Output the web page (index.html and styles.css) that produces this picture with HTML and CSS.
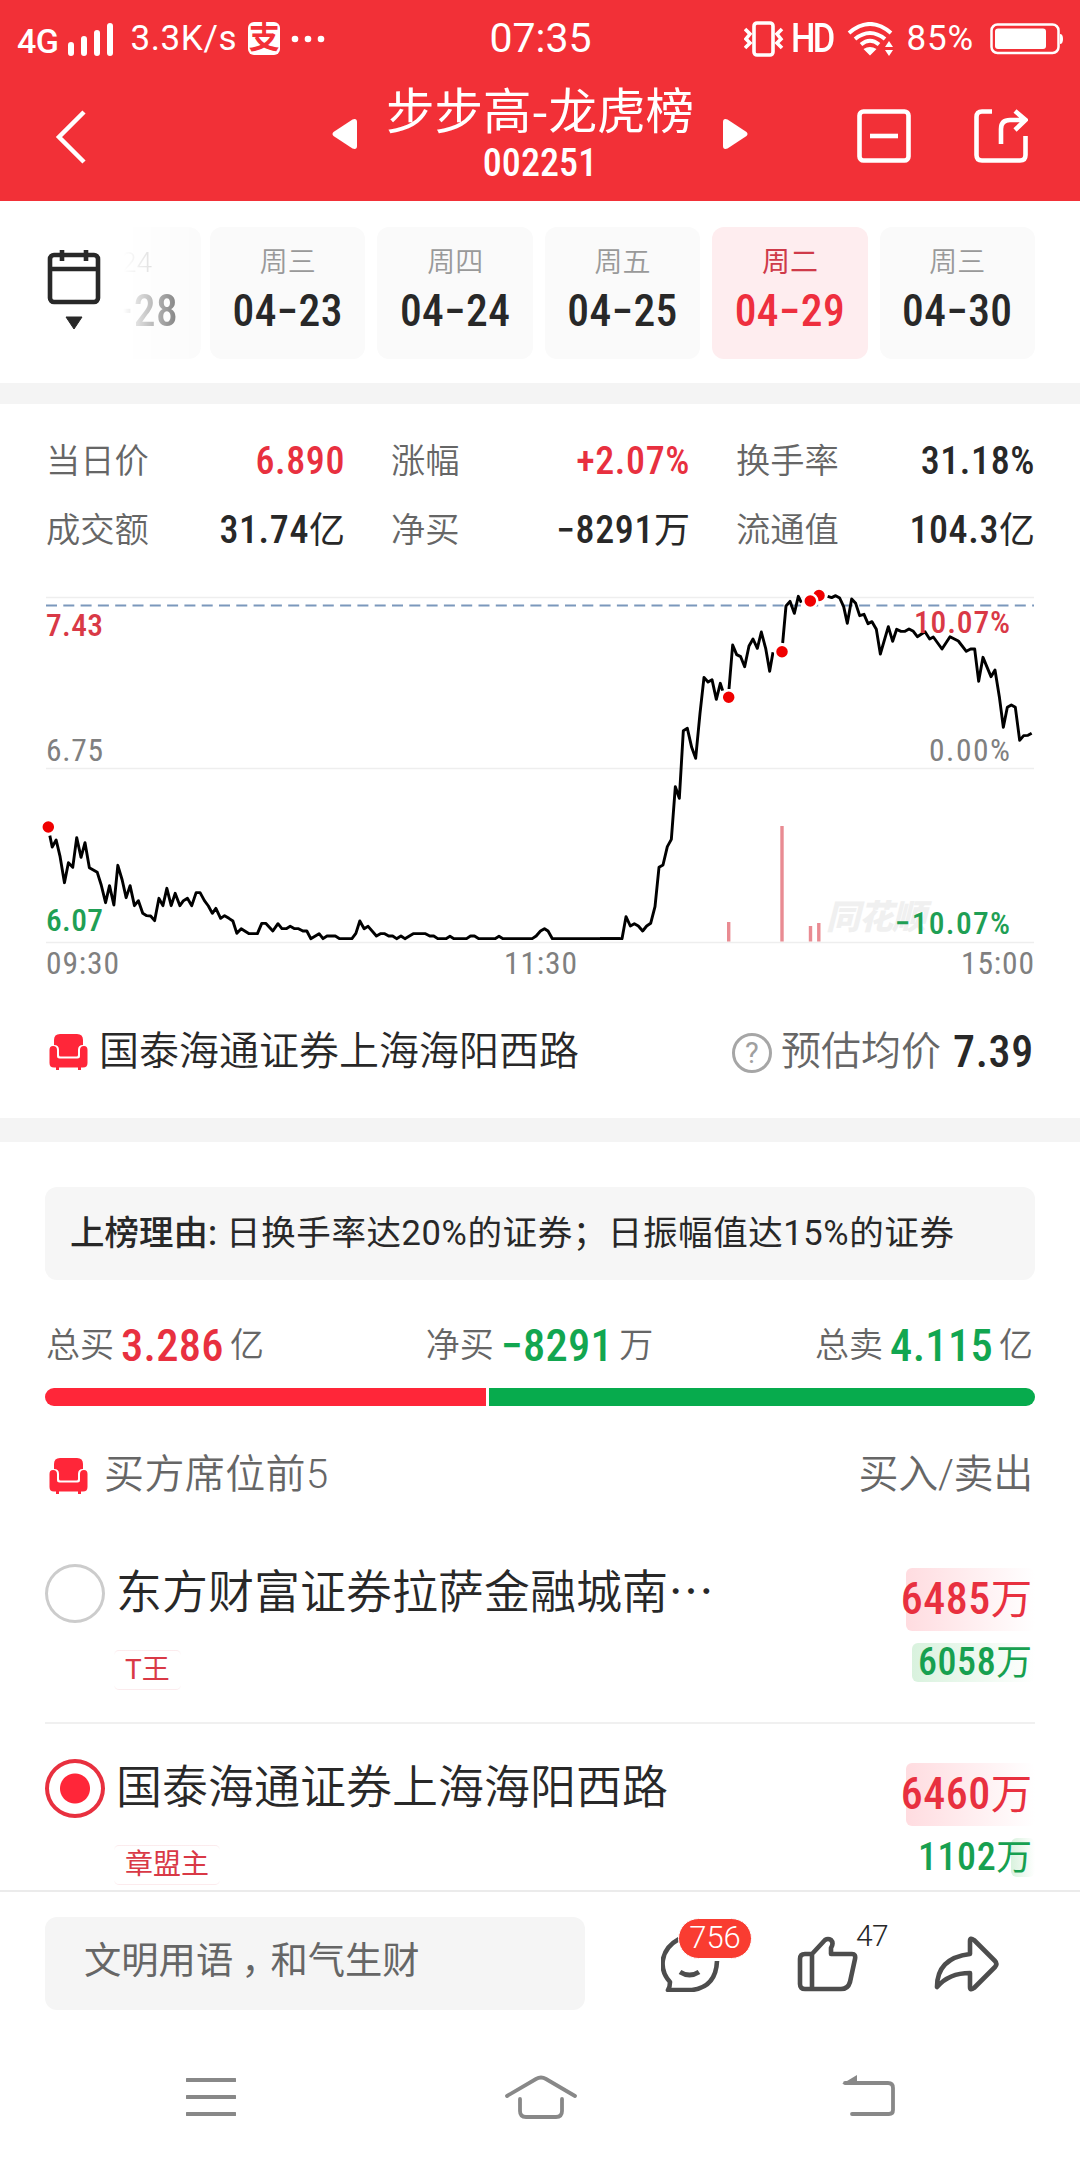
FILE: index.html
```html
<!DOCTYPE html>
<html lang="zh-CN">
<head>
<meta charset="utf-8">
<title>步步高-龙虎榜</title>
<link rel="stylesheet" href="styles.css">
</head>
<body>
<svg class="defs" width="0" height="0" aria-hidden="true">
  <symbol id="seat" viewBox="0 0 40 38">
    <path d="M5 12V7Q5 1 11 1H28Q34 1 34 7V12Q29 12 29 17V22Q29 23.500 27.500 23.500H11.500Q10 23.500 10 22V17Q10 12 5 12Z"/>
    <path d="M4 13Q8 13 8 17V23Q8 25.500 10.500 25.500H28.500Q31 25.500 31 23V17Q31 13 35 13Q38.500 13 38.500 17V30Q38.500 34.500 34 34.500H32V37H29V34.500H10V37H7V34.500H5Q.5 34.500 .5 30V17Q.5 13 4 13Z"/>
  </symbol>
</svg>

<header class="header">
  <div class="status">
    <div class="status-left">
      <span class="net">4G</span>
      <svg class="signal" width="46" height="34" viewBox="0 0 46 34"><path d="M3 23V31M16 17V31M29 11V31M42 4V31"/></svg>
      <span class="speed">3.3K/s</span>
      <span class="pay">支</span>
      <svg width="34" height="8" viewBox="0 0 34 8"><circle cx="4" cy="4" r="3.300"/><circle cx="17" cy="4" r="3.300"/><circle cx="30" cy="4" r="3.300"/></svg>
    </div>
    <div class="clock">07:35</div>
    <div class="status-right">
      <svg class="vib" width="40" height="36" viewBox="0 0 40 36"><rect x="10" y="2" width="19" height="32" rx="3"/><path d="M1 8L6 13L2 18L6 22L1 27M38 8L33 13L37 18L33 22L38 27"/></svg>
      <span class="hd">HD</span>
      <svg class="wifi" width="47" height="34" viewBox="0 0 47 34"><path class="arc" d="M2 11Q23 -7 44 11M8 17Q23 5 38 17M14 22.500Q23 15 32 22.500"/><path class="tip" d="M16.500 27Q23 23 29.500 27L23 33.500ZM38 25L42 19L46 25ZM38 28L42 34L46 28Z"/></svg>
      <span class="pct">85%</span>
      <svg class="battery" width="74" height="32" viewBox="0 0 74 32"><rect class="case" x="1.500" y="1.500" width="67" height="28.500" rx="6"/><rect class="fill" x="5" y="5.500" width="51" height="20.500" rx="3"/><path class="fill" d="M70 11Q73 11 73 16Q73 21 70 21Z"/></svg>
    </div>
  </div>
  <div class="titlebar">
    <svg class="back" width="32" height="56" viewBox="0 0 32 56"><path d="M29 3L4 28L29 53"/></svg>
    <div class="titles">
      <svg width="26" height="32" viewBox="0 0 26 32"><path d="M1.500 14L20.500 1.500Q25 0 25 4V28Q25 32 20.500 30.500L1.500 18Q-.5 16 1.500 14Z"/></svg>
      <div class="names"><h1>步步高-龙虎榜</h1><div class="code">002251</div></div>
      <svg width="26" height="32" viewBox="0 0 26 32"><path d="M24.500 14L5.500 1.500Q1 0 1 4V28Q1 32 5.500 30.500L24.500 18Q26.500 16 24.500 14Z"/></svg>
    </div>
    <div class="tools">
      <svg width="54" height="54" viewBox="0 0 54 54"><rect x="2.500" y="2.500" width="49" height="49" rx="4"/><path d="M13 27H41"/></svg>
      <svg width="54" height="54" viewBox="0 0 54 54"><path d="M18 2.500H8Q2.500 2.500 2.500 8V46Q2.500 51.500 8 51.500H46Q51.500 51.500 51.500 46V27M27 35V20Q27 11 36 11H51M41 2L51.500 11L41 21"/></svg>
    </div>
  </div>
</header>

<section class="dates">
  <div class="calendar">
    <svg width="54" height="82" viewBox="0 0 54 82"><rect x="3" y="6" width="48" height="47" rx="4"/><path d="M3 20H51M15 1V12M39 1V12"/><path class="tri" d="M19 68H35L27 80Z"/></svg>
  </div>
  <div class="strip">
    <div class="day past"><span class="wk">24</span><span class="num">−28</span></div>
    <div class="day"><span class="wk">周三</span><span class="num">04−23</span></div>
    <div class="day"><span class="wk">周四</span><span class="num">04−24</span></div>
    <div class="day"><span class="wk">周五</span><span class="num">04−25</span></div>
    <div class="day active"><span class="wk">周二</span><span class="num">04−29</span></div>
    <div class="day"><span class="wk">周三</span><span class="num">04−30</span></div>
  </div>
</section>

<section class="quote">
  <dl class="stats">
    <div><dt>当日价</dt><dd class="up">6.890</dd></div>
    <div><dt>涨幅</dt><dd class="up">+2.07%</dd></div>
    <div><dt>换手率</dt><dd>31.18%</dd></div>
    <div><dt>成交额</dt><dd>31.74<small>亿</small></dd></div>
    <div><dt>净买</dt><dd>−8291<small>万</small></dd></div>
    <div><dt>流通值</dt><dd>104.3<small>亿</small></dd></div>
  </dl>
  <svg class="chart" width="1080" height="416" viewBox="0 570 1080 416">
    <path class="grid" d="M46 597.500H1034M46 768.500H1034M46 942.500H1034"/>
    <path class="avg" d="M46 605.500H1034"/>
    <text class="mark" x="826" y="929" textLength="100">同花顺</text>
    <path class="vol" d="M728.700 922V941.500M782 826V941.500M810.500 926V941.500M818.800 923V941.500"/>
    <g transform="translate(0 570) scale(.3954 .33333)">
      <polyline class="price" points="126,797 132,831 142,810 152,860 163,938 173,878 184,892 194,803 205,862 215,818 226,893 246,907 256,945 267,998 277,947 288,1005 298,886 309,930 319,983 329,947 340,1007 350,992 361,1030 371,1037 381,1038 391,1052 402,985 412,1007 422,955 433,1007 443,970 455,1007 464,992 474,985 485,1007 496,968 506,968 517,992 527,1008 537,1030 546,1015 558,1045 568,1037 579,1045 589,1053 599,1090 610,1076 630,1091 651,1091 662,1060 672,1060 690,1083 703,1061 713,1076 724,1076 734,1069 745,1076 755,1076 766,1083 776,1083 786,1106 807,1091 817,1106 827,1098 848,1098 859,1106 890,1106 900,1090 910,1053 921,1076 931,1069 952,1098 962,1091 973,1091 983,1098 993,1098 1003,1106 1014,1098 1024,1106 1045,1091 1076,1091 1087,1098 1097,1098 1107,1106 1128,1106 1138,1099 1148,1106 1180,1106 1190,1098 1200,1098 1211,1106 1252,1106 1262,1099 1272,1106 1346,1106 1356,1098 1367,1083 1377,1076 1386,1083 1397,1106 1568,1106"/>
    </g>
    <g transform="translate(600 570) scale(.33333)">
      <polyline class="price" points="0,1106 66,1106 78,1040 91,1068 103,1061 115,1068 128,1083 140,1068 152,1060 165,1010 177,892 189,885 202,830 214,808 226,650 238,685 250,482 262,475 275,532 287,565 300,430 312,322 324,336 336,329 349,388 361,340 368,362"/>
      <polyline class="price" points="387,357 398,225 410,254 422,260 434,290 447,228 459,207 472,235 484,186 497,235 509,304 519,247"/>
      <polyline class="price" points="548,219 558,108 570,94 583,130 595,79 604,98"/>
      <polyline class="price" points="683,79 695,83 707,77 719,84 731,110 742,160 755,87 767,100 779,137 792,133 804,161 816,155 829,178 841,252 865,170 878,214 890,178 903,184 915,184 927,177 940,184 952,200 975,185 989,207 1000,201 1026,237 1050,200 1075,213 1099,244 1112,237 1124,237 1136,334 1149,262 1173,320 1185,300 1198,380 1210,472 1222,412 1234,405 1246,412 1259,511 1271,497 1284,496 1295,490"/>
    </g>
    <g class="dots"><circle cx="48.300" cy="827" r="7"/><circle cx="728.700" cy="697.300" r="7"/><circle cx="782" cy="651.700" r="7"/><circle cx="819" cy="595.500" r="7"/><circle cx="810.300" cy="601" r="7"/></g>
    <g class="axis">
      <text class="red" x="46" y="636" textLength="57">7.43</text>
      <text x="46" y="761" textLength="57">6.75</text>
      <text class="green" x="46" y="931" textLength="57">6.07</text>
      <text class="red" x="914" y="633" textLength="96">10.07%</text>
      <text x="929" y="761" textLength="81">0.00%</text>
      <text class="green" x="895" y="934" textLength="115">−10.07%</text>
      <text x="46" y="974" textLength="73">09:30</text>
      <text x="504" y="974" textLength="73">11:30</text>
      <text x="961" y="974" textLength="73">15:00</text>
    </g>
  </svg>
  <div class="broker">
    <svg class="seat" width="40" height="38"><use href="#seat"/></svg>
    <span class="broker-name">国泰海通证券上海海阳西路</span>
    <span class="help">?</span>
    <span class="est">预估均价</span>
    <b class="est-num">7.39</b>
  </div>
</section>

<section class="board">
  <p class="reason"><b>上榜理由:</b><span>日换手率达20%的证券；日振幅值达15%的证券</span></p>
  <div class="totals">
    <div>总买<b class="up">3.286</b>亿</div>
    <div>净买<b class="down">−8291</b>万</div>
    <div>总卖<b class="down">4.115</b>亿</div>
  </div>
  <div class="ratio"><i class="buy"></i><i class="sell"></i></div>
  <div class="list-head">
    <svg class="seat" width="40" height="38"><use href="#seat"/></svg>
    <span>买方席位前5</span><span class="cols">买入/卖出</span>
  </div>
  <article class="row">
    <i class="radio"></i>
    <div class="who"><h2>东方财富证券拉萨金融城南<span class="more">⋯</span></h2><span class="tag">T王</span></div>
    <div class="amounts"><div class="in"><i></i><span>6485<small>万</small></span></div><div class="out"><i></i><span>6058<small>万</small></span></div></div>
  </article>
  <article class="row">
    <i class="radio on"></i>
    <div class="who"><h2>国泰海通证券上海海阳西路</h2><span class="tag">章盟主</span></div>
    <div class="amounts"><div class="in"><i></i><span>6460<small>万</small></span></div><div class="out short"><i></i><span>1102<small>万</small></span></div></div>
  </article>
</section>

<footer class="footer">
  <div class="input">文明用语<span class="comma">，</span>和气生财</div>
  <div class="action chat">
    <svg width="60" height="56" viewBox="0 0 60 56"><path d="M18 3C-2 14 -2 34 9 46Q9 51 7 54H31Q55 51 56 25"/><path class="smile" d="M19 36Q28.500 42 38 36"/></svg>
    <span class="badge">756</span>
  </div>
  <div class="action like">
    <svg width="62" height="56" viewBox="0 0 62 56"><path d="M8 18H15L28 4Q31 2 34 4Q37 7 34 12V18H55Q59 18 58 23L53 46Q51 53 44 53H8Q3 53 3 48V23Q3 18 8 18ZM15 18V53"/></svg>
    <span class="likes">47</span>
  </div>
  <div class="action">
    <svg width="66" height="56" viewBox="0 0 66 56"><path d="M37 5Q37 1 41 4L62 25Q65 28 62 31L41 52Q37 55 37 51V37Q16 37 4 51Q4 22 37 18Z"/></svg>
  </div>
</footer>
<nav class="nav">
  <svg width="50" height="44" viewBox="0 0 50 44"><path d="M1 5H49M1 22H49M1 39H49"/></svg>
  <svg class="home" width="72" height="46" viewBox="0 0 72 46"><path d="M2 22L31 5Q36 2 41 5L70 22M15 25V37Q15 43 21 43H51Q57 43 57 37V25"/></svg>
  <svg width="54" height="44" viewBox="0 0 54 44"><path d="M10 39H47Q51 39 51 35V13Q51 8 46 8H3"/><path class="head" d="M0 9L15 0V9Z"/></svg>
</nav>
</body>
</html>
```
FILE: styles.css
```css
* { box-sizing: border-box; margin: 0; padding: 0; }
body {
  width: 1080px; height: 2160px; overflow: hidden;
  display: flex; flex-direction: column;
  background: #fff; color: #282828;
  font-family: Roboto, "Noto Sans CJK SC", sans-serif; font-weight: 350; line-height: 1.172;
}
svg { display: block; flex: none; }
i { font-style: normal; }
small { font-size: 1em; font-weight: 400; }
.defs { position: absolute; }
.up { color: #e8303f; }
.down { color: #12a650; }
.code, .num, dd, .est-num, .totals b, .amounts span { font-stretch: 75%; }

.header { flex: none; height: 201px; background: #f23037; color: #fff; }
.status { height: 74px; display: grid; grid-template-columns: 1fr auto 1fr; align-items: center; padding: 0 16px 3px 17px; }
.status svg { fill: #fff; }
.status-left, .status-right { display: flex; align-items: center; font-size: 35px; line-height: 71px; }
.status-right { justify-content: flex-end; }
.net { font-size: 34px; font-weight: 500; letter-spacing: -.5px; padding-top: 6px; }
.status .signal { fill: none; stroke: #fff; stroke-width: 6; stroke-linecap: round; margin: 0 16px 0 10px; }
.speed { font-weight: 400; letter-spacing: .6px; }
.pay { width: 32px; height: 33px; margin: 0 11px 0 11px; border-radius: 6px; background: #fff; color: #f23037; font-size: 31px; line-height: 32px; font-weight: 700; text-align: center; }
.clock { font-size: 41px; font-weight: 400; }
.status .vib { fill: none; stroke: #fff; stroke-width: 3.600; }
.hd { font-size: 40px; font-weight: 500; letter-spacing: -3px; margin: 0 10px 0 7px; transform-origin: left; transform: scaleX(.86); width: 46px; }
.wifi .arc { fill: none; stroke: #fff; stroke-width: 4; }
.pct { font-weight: 400; margin: 0 16px 0 13px; letter-spacing: .8px; }
.status .battery .case { fill: none; stroke: #fff; stroke-width: 2.500; }
.titlebar { height: 127px; display: flex; align-items: center; justify-content: space-between; padding: 0 52px 4px 55px; }
.titlebar svg { fill: #fff; }
.titlebar .back { fill: none; stroke: #fff; stroke-width: 4.500; margin-top: 2px; }
.titles { display: flex; gap: 28px; margin: -14px 0 0 136px; }
.titles svg { margin-top: 44px; }
.names { width: 308px; text-align: center; white-space: nowrap; }
h1 { font-size: 48.500px; line-height: 68px; font-weight: 400; font-family: "Noto Sans CJK SC", sans-serif; }
.code { font-size: 38px; line-height: 42px; font-weight: 500; letter-spacing: .1px; }
.tools { display: flex; gap: 63px; }
.titlebar .tools svg { fill: none; stroke: #fff; stroke-width: 4.600; }

.dates { flex: none; height: 182px; display: flex; align-items: flex-start; padding: 26px 45px 0; }
.calendar { width: 45px; padding: 22px 0 0 2px; }
.calendar svg { fill: none; stroke: #282828; stroke-width: 4.600; }
.calendar .tri { fill: #282828; stroke-width: 1; }
.strip { flex: 1; display: flex; justify-content: flex-end; gap: 12px; }
.day { flex: none; width: 155.400px; height: 132px; border-radius: 12px; background: #fafafa; display: flex; flex-direction: column; align-items: center; padding-top: 19px; }
.wk { font-size: 28px; line-height: 34px; color: #999; }
.num { font-size: 43.500px; line-height: 64px; font-weight: 500; letter-spacing: .4px; }
.active { background: #feedef; }
.active .wk { color: #cf3a49; font-weight: 400; }
.active .num { color: #ee2f3e; }
.past { width: 108px; margin-right: -3px; align-items: flex-start; padding-left: 28px; -webkit-mask: linear-gradient(90deg, transparent 28%, #000 115%); mask: linear-gradient(90deg, transparent 28%, #000 115%); }
.past .num { margin-left: -9px; }

.quote { flex: none; border-top: 21px solid #f4f4f4; height: 735px; padding-top: 23px; }
.stats { display: grid; grid-template-columns: repeat(3, 299px); column-gap: 46px; row-gap: 0; margin-left: 46px; }
.stats div { display: flex; justify-content: space-between; align-items: center; height: 69px; }
dt { font-size: 34.300px; color: #666; }
dd { font-size: 38px; font-weight: 500; letter-spacing: .6px; white-space: nowrap; }
dd small { font-size: 36px; letter-spacing: 0; }
.chart { display: block; margin-top: 5px; }
.grid { stroke: #eee; stroke-width: 1.500; }
.avg { stroke: #7b98bc; stroke-width: 2; stroke-dasharray: 11 6.300; }
.mark { font: italic 900 34px "Noto Sans CJK SC", sans-serif; fill: #f0f0f0; }
.vol { stroke: #e98b92; stroke-width: 3.400; }
.price { fill: none; stroke: #000; stroke-width: 2.900; stroke-linejoin: round; vector-effect: non-scaling-stroke; }
.dots circle { fill: #f00000; stroke: #fff; stroke-width: 2.500; }
.axis text { font: 400 31.500px Roboto, sans-serif; font-stretch: 75%; fill: #808080; }
.axis .red { fill: #d93946; font-weight: 500; }
.axis .green { fill: #1f9f55; font-weight: 500; }
.broker { height: 134px; display: flex; align-items: center; padding: 0 46px 2px 49px; }
.seat { fill: #ff2639; }
.broker-name { font-size: 40px; margin-left: 10px; margin-right: auto; }
.help { width: 40px; height: 40px; border: 3px solid #a6a6a6; border-radius: 50%; color: #a0a0a0; font-size: 29px; line-height: 35px; font-weight: 400; text-align: center; margin-top: 1px; }
.est { font-size: 40px; color: #666; margin: 0 12px 0 9px; }
.est-num { font-size: 44px; font-weight: 500; letter-spacing: .7px; margin-top: 2px; }

.board { flex: none; height: 772px; overflow: hidden; border-top: 24px solid #f4f4f4; padding: 45px 45px 0; }
.reason { height: 93px; border-radius: 12px; background: #f6f6f6; display: flex; align-items: center; gap: 9px; padding: 0 0 0 25px; font-size: 34.500px; white-space: nowrap; }
.reason b { font-weight: 500; }
.reason span { letter-spacing: .6px; font-weight: 400; }
.totals { height: 108px; display: flex; justify-content: space-between; align-items: center; padding: 24px 2px 0 1px; font-size: 34px; color: #666; }
.totals div { display: flex; align-items: center; height: 60px; }
.totals b { font-size: 44.500px; font-weight: 500; letter-spacing: .3px; margin: 0 6px 0 7px; }
.ratio { display: flex; gap: 3px; height: 18px; border-radius: 9px; overflow: hidden; }
.buy { flex: 3.286; background: #ff2639; }
.sell { flex: 4.070; background: #07ab4d; }
.list-head { height: 134px; display: flex; align-items: center; padding: 5px 2px 0 4px; font-size: 40px; color: #666; }
.list-head .seat { margin-right: 15px; }
.list-head span { letter-spacing: .4px; }
.list-head .cols { margin-left: auto; letter-spacing: -.3px; }
.row { height: 195px; display: flex; border-top: 2px solid #f0f0f0; }
.row:nth-of-type(1) { height: 181px; border: 0; margin-top: 1px; }
.row:nth-of-type(2) { padding-top: 12px; }
.radio { flex: none; width: 60px; height: 59px; border: 3.500px solid #ccc; border-radius: 50%; margin: 23px 11px 0 0; }
.radio.on { border: 4.500px solid #e8303f; background: radial-gradient(circle, #ff2639 14.500px, transparent 15.500px); }
.who { flex: 1; }
h2 { font-size: 46px; line-height: 60px; font-weight: 350; margin-top: 21px; white-space: nowrap; }
.tag { display: inline-block; height: 40px; margin: 28px 0 0 -2px; padding: 0 10px; border: 1px dotted transparent; border-radius: 5px; color: #d93946; font-size: 28px; line-height: 38px; font-weight: 400;
  background: linear-gradient(#fff, #fff) padding-box, linear-gradient(#fbe9eb, #fff 12%, #fff 88%, #fbe9eb) border-box; }
.amounts { width: 132px; padding-top: 27px; }
.amounts > div { display: flex; position: relative; justify-content: flex-end; align-items: center; white-space: nowrap; }
.amounts i { position: absolute; right: 0; top: 0; bottom: 0; width: 129px; border-radius: 6px; }
.amounts span { position: relative; font-weight: 500; margin-right: 3px; }
.amounts small { letter-spacing: 0; font-size: .94em; }
.in { height: 63px; font-size: 44px; letter-spacing: .5px; color: #e8303f; }
.in i { background: linear-gradient(90deg, #ffdce0, #fff); }
.out { height: 39px; margin-top: 12px; font-size: 38px; letter-spacing: .6px; color: #17a050; }
.out i { width: 123px; background: linear-gradient(90deg, #d9f2de, #fff); }
.short i { width: 24px; }

.footer { flex: none; height: 140px; border-top: 2px solid #ebebeb; display: flex; align-items: flex-start; padding: 25px 0 0 45px; }
.input { width: 540px; height: 93px; border-radius: 12px; background: #f5f5f5; padding-left: 39px; font-size: 37.300px; line-height: 88px; font-weight: 400; color: #666; margin-right: 76px; }
.comma { display: inline-block; width: 1em; text-indent: 8px; white-space: nowrap; }
.action { position: relative; width: 136px; padding-top: 19px; }
.action svg { fill: none; stroke: #4d4d4d; stroke-width: 4.600; stroke-linejoin: round; }
.action .smile { stroke-width: 5; }
.badge { position: absolute; left: 17px; top: 1px; width: 74px; height: 41px; border: 1px solid #fff; border-radius: 21px; background: #f93c31; color: #fff; font-size: 31px; line-height: 38px; font-weight: 300; text-align: center; }
.likes { position: absolute; left: 59px; top: -1px; font-size: 30px; line-height: 40px; font-weight: 300; letter-spacing: -.6px; }
.nav { height: 130px; display: flex; justify-content: space-between; align-items: center; padding: 4px 184px 0 186px; }
.nav svg { fill: none; stroke: #888; stroke-width: 3.800; stroke-linecap: round; }
.nav .home { margin-left: 3px; }
.nav .head { fill: #888; stroke: none; }
```
